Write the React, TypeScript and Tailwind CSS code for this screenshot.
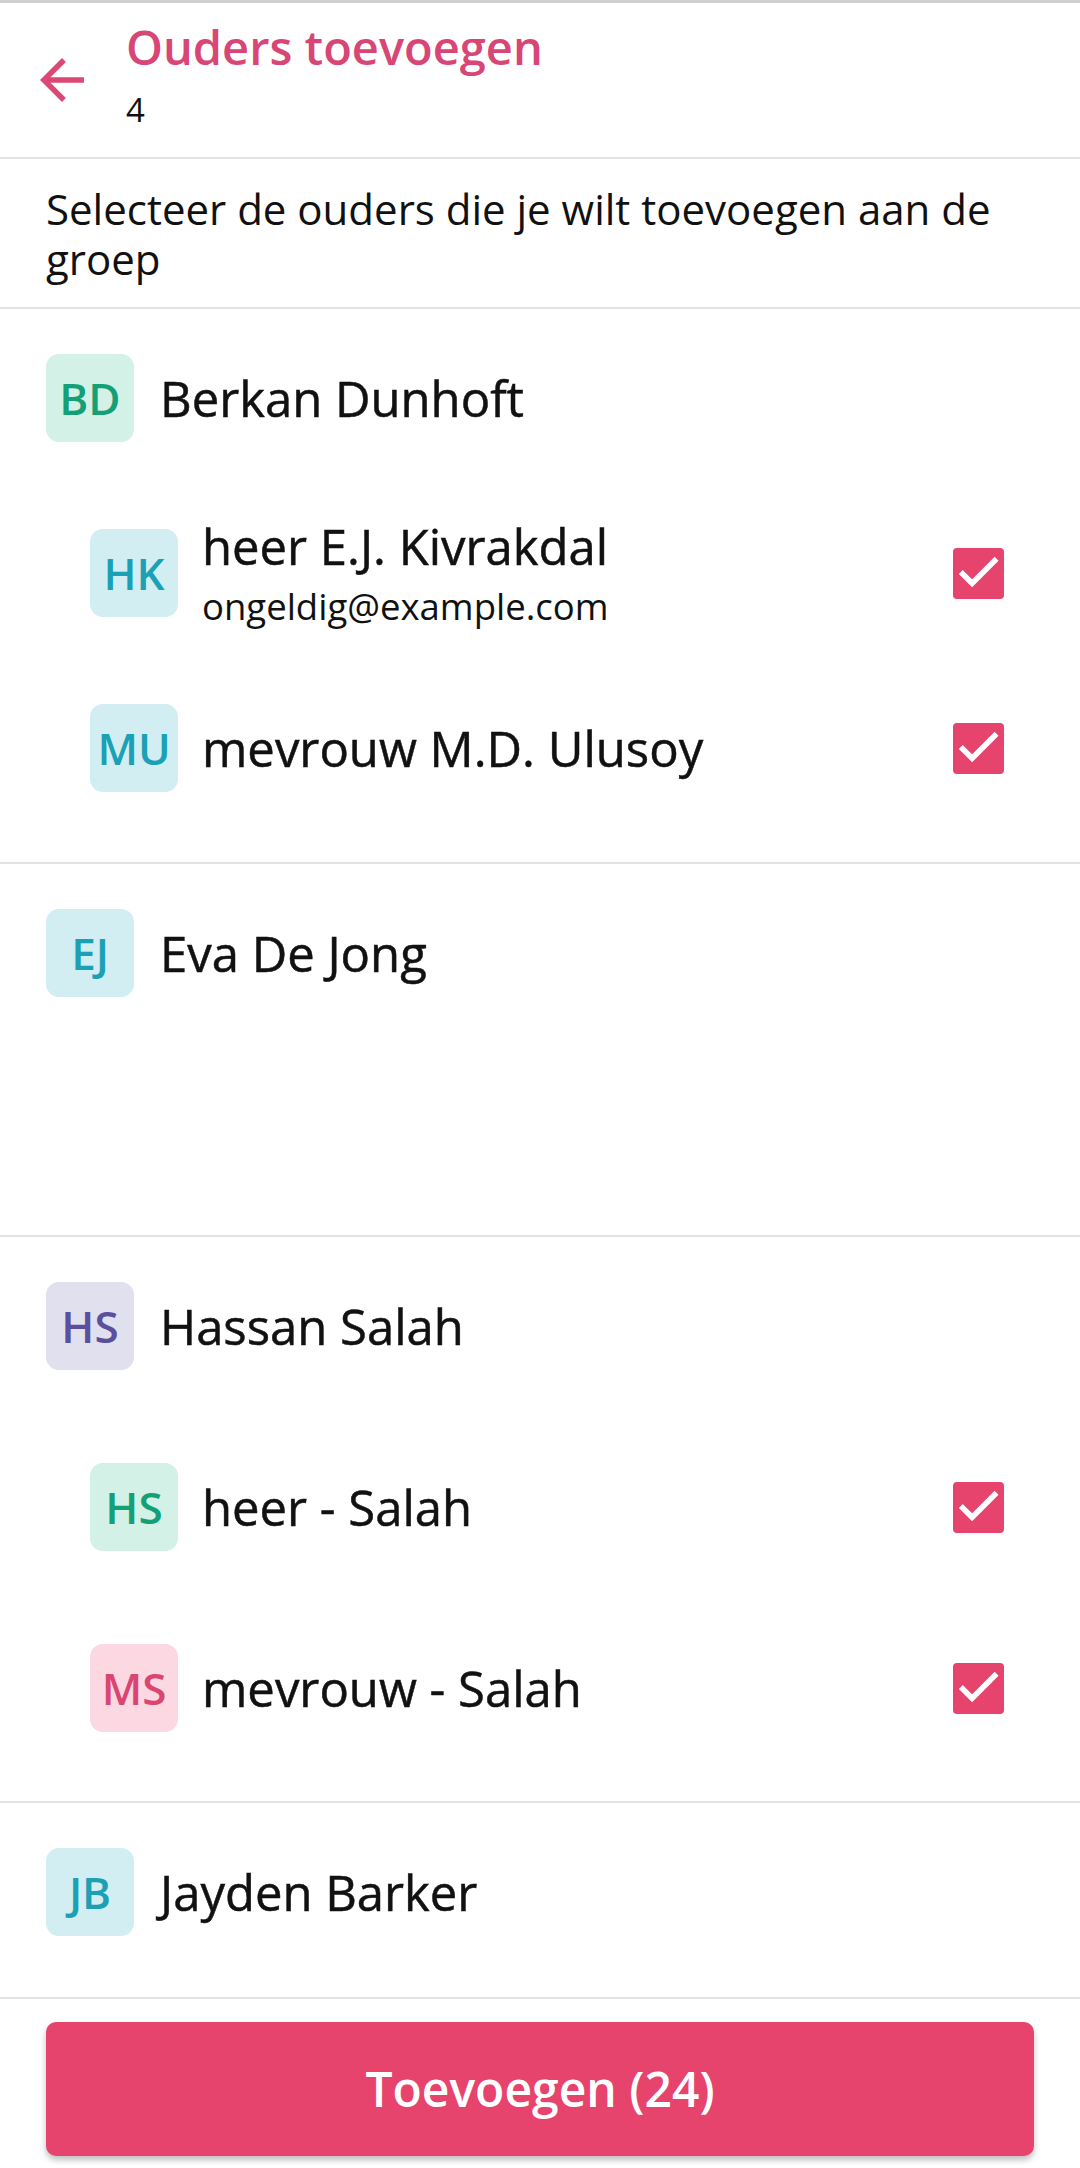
import React from "react";

type Tone = "green" | "teal" | "purple" | "pink";

interface Parent {
  initials: string;
  name: string;
  email?: string;
  tone: Tone;
}

interface Group {
  initials: string;
  name: string;
  tone: Tone;
  gap: string;
  bottom: string;
  parents: Parent[];
}

const tones: Record<Tone, string> = {
  green: "bg-[#d3f1e6] text-[#14a077]",
  teal: "bg-[#d2eef2] text-[#1ba0b6]",
  purple: "bg-[#e1e0ef] text-[#5b4f9e]",
  pink: "bg-[#fbd8e2] text-[#da4672]",
};

const groups: Group[] = [
  {
    initials: "BD",
    name: "Berkan Dunhoft",
    tone: "green",
    gap: "mt-[87px]",
    bottom: "pb-[70px]",
    parents: [
      { initials: "HK", name: "heer E.J. Kivrakdal", email: "ongeldig@example.com", tone: "teal" },
      { initials: "MU", name: "mevrouw M.D. Ulusoy", tone: "teal" },
    ],
  },
  {
    initials: "EJ",
    name: "Eva De Jong",
    tone: "teal",
    gap: "mt-[87px]",
    bottom: "pb-[238px]",
    parents: [],
  },
  {
    initials: "HS",
    name: "Hassan Salah",
    tone: "purple",
    gap: "mt-[93px]",
    bottom: "pb-[69px]",
    parents: [
      { initials: "HS", name: "heer - Salah", tone: "green" },
      { initials: "MS", name: "mevrouw - Salah", tone: "pink" },
    ],
  },
  {
    initials: "JB",
    name: "Jayden Barker",
    tone: "teal",
    gap: "mt-[87px]",
    bottom: "pb-[61px]",
    parents: [],
  },
];

function Avatar({ initials, tone }: { initials: string; tone: Tone }) {
  return (
    <div
      className={`w-[88px] h-[88px] shrink-0 rounded-[13px] flex items-center justify-center text-[44px] font-semibold ${tones[tone]}`}
    >
      {initials}
    </div>
  );
}

function Checkbox() {
  return (
    <div className="w-[51px] h-[51px] rounded-[4px] bg-[#e6436d] flex items-center justify-center">
      <svg viewBox="0 0 24 24" className="w-[51px] h-[51px]">
        <path
          d="M4.6 12.2 9 16.6 19.6 6"
          fill="none"
          stroke="#ffffff"
          strokeWidth="2.6"
          strokeLinecap="square"
        />
      </svg>
    </div>
  );
}

export default function App() {
  return (
    <div
      className="w-[1080px] h-[2168px] bg-white flex flex-col overflow-hidden text-[#111111]"
      style={{ fontFamily: '"Open Sans", "Noto Sans", sans-serif' }}
    >
      {/* Header */}
      <div className="border-t-[3px] border-[#cfcfcf] border-b-2 border-b-[#e2e2e2] pt-[16px] pb-[27px] pl-[29px] flex items-start">
        <svg viewBox="0 0 24 24" className="w-[66px] h-[66px] mt-[28px] shrink-0">
          <path
            d="M20 11H7.83l5.59-5.59L12 4l-8 8 8 8 1.41-1.41L7.83 13H20v-2z"
            fill="#dc4874"
          />
        </svg>
        <div className="ml-[31px]">
          <div className="text-[47px] leading-[56px] font-semibold text-[#d84676]">
            Ouders toevoegen
          </div>
          <div className="mt-[15px] text-[33px] leading-[40px]">4</div>
        </div>
      </div>

      {/* Description */}
      <div className="border-b-2 border-[#e2e2e2] px-[46px] pt-[25px] pb-[23px] text-[42px] leading-[50px]">
        Selecteer de ouders die je wilt toevoegen aan de groep
      </div>

      {/* List */}
      <div className="flex-1 min-h-0 overflow-hidden">
        {groups.map((g, i) => (
          <div key={i} className={`border-b-2 border-[#e2e2e2] pt-[45px] ${g.bottom}`}>
            <div className="flex items-center h-[88px] pl-[46px]">
              <Avatar initials={g.initials} tone={g.tone} />
              <div className="ml-[26px] text-[49px] leading-[56px] [-webkit-text-stroke:0.5px_#111111]">
                {g.name}
              </div>
            </div>
            {g.parents.map((p, j) => (
              <div key={j} className={`flex items-center h-[88px] pl-[90px] pr-[76px] ${g.gap}`}>
                <Avatar initials={p.initials} tone={p.tone} />
                <div className="ml-[24px] flex-1">
                  <div className="text-[49px] leading-[56px] [-webkit-text-stroke:0.5px_#111111]">
                    {p.name}
                  </div>
                  {p.email && (
                    <div className="mt-[10px] text-[36.5px] leading-[44px]">{p.email}</div>
                  )}
                </div>
                <Checkbox />
              </div>
            ))}
          </div>
        ))}
      </div>

      {/* Footer */}
      <div className="px-[46px] pt-[23px] pb-[12px]">
        <button className="w-full h-[134px] rounded-[10px] bg-[#e6436d] text-white text-[48px] font-semibold shadow-[0_4px_6px_rgba(0,0,0,0.25)]">
          Toevoegen (24)
        </button>
      </div>
    </div>
  );
}
